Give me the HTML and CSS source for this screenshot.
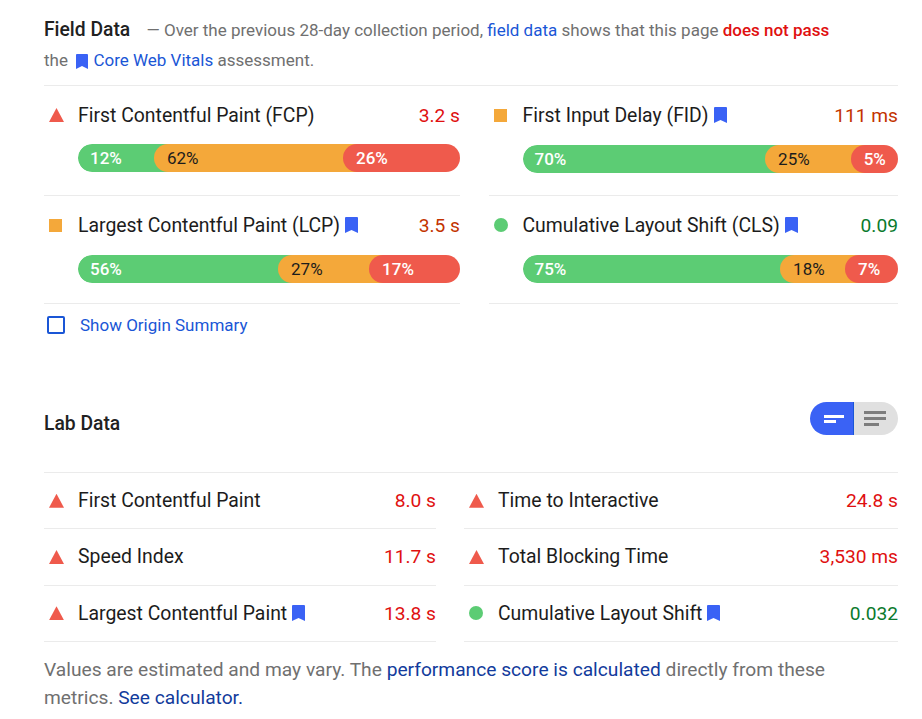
FILE: index.html
```html
<!DOCTYPE html>
<html lang="en">
<head>
  <meta charset="UTF-8">
  <title>PageSpeed Insights</title>
  <link rel="stylesheet" href="styles.css">
</head>
<body>

  <!-- Field data -->
  <section class="field-head">
    <p class="intro">
      <span class="section-title">Field Data</span>
      <span class="intro-dash">—</span> Over the previous 28-day collection period, <a href="#">field data</a> shows that this page <span class="fail-text">does not pass</span><br>
      the <svg class="mark mark-inline" viewBox="0 0 13 16"><path d="M1 0h11a1 1 0 0 1 1 1v15l-6.500-3L0 16V1a1 1 0 0 1 1-1z"/></svg> <a href="#">Core Web Vitals</a> assessment.
    </p>
  </section>

  <div class="field-grid">
    <div class="field-metric">
      <div class="metric-line">
        <i class="icon-fail"></i>
        <span class="metric-name">First Contentful Paint (FCP)</span>
        <span class="metric-value value-fail">3.2 s</span>
      </div>
      <div class="bar">
        <div class="seg seg-good" style="width: 23.82%">12%</div>
        <div class="seg seg-avg" style="width: 53.4%">62%</div>
        <div class="seg seg-bad">26%</div>
      </div>
    </div>
    <div class="field-metric">
      <div class="metric-line">
        <i class="icon-avg"></i>
        <span class="metric-name">First Input Delay (FID)</span>
        <svg class="mark" viewBox="0 0 13 16"><path d="M1 0h11a1 1 0 0 1 1 1v15l-6.500-3L0 16V1a1 1 0 0 1 1-1z"/></svg>
        <span class="metric-value value-avg">111 ms</span>
      </div>
      <div class="bar">
        <div class="seg seg-good" style="width: 68.6%">70%</div>
        <div class="seg seg-avg" style="width: 26.8%">25%</div>
        <div class="seg seg-bad">5%</div>
      </div>
    </div>
    <div class="field-metric">
      <div class="metric-line">
        <i class="icon-avg"></i>
        <span class="metric-name">Largest Contentful Paint (LCP)</span>
        <svg class="mark" viewBox="0 0 13 16"><path d="M1 0h11a1 1 0 0 1 1 1v15l-6.500-3L0 16V1a1 1 0 0 1 1-1z"/></svg>
        <span class="metric-value value-avg">3.5 s</span>
      </div>
      <div class="bar">
        <div class="seg seg-good" style="width: 56.3%">56%</div>
        <div class="seg seg-avg" style="width: 27.75%">27%</div>
        <div class="seg seg-bad">17%</div>
      </div>
    </div>
    <div class="field-metric">
      <div class="metric-line">
        <i class="icon-good"></i>
        <span class="metric-name">Cumulative Layout Shift (CLS)</span>
        <svg class="mark" viewBox="0 0 13 16"><path d="M1 0h11a1 1 0 0 1 1 1v15l-6.500-3L0 16V1a1 1 0 0 1 1-1z"/></svg>
        <span class="metric-value value-good">0.09</span>
      </div>
      <div class="bar">
        <div class="seg seg-good" style="width: 72.6%">75%</div>
        <div class="seg seg-avg" style="width: 21.3%">18%</div>
        <div class="seg seg-bad">7%</div>
      </div>
    </div>
  </div>

  <label class="origin">
    <span class="checkbox"></span>
    <span>Show Origin Summary</span>
  </label>

  <!-- Lab data -->
  <div class="lab-head">
    <span class="section-title lab-title">Lab Data</span>
    <div class="toggle">
      <div class="toggle-on">
        <span class="line"></span>
        <span class="line line-short"></span>
      </div>
      <div class="toggle-off">
        <span class="line"></span>
        <span class="line"></span>
        <span class="line line-short"></span>
      </div>
    </div>
  </div>

  <div class="lab-grid">
    <div class="lab-metric">
      <i class="icon-fail"></i>
      <span class="metric-name">First Contentful Paint</span>
      <span class="metric-value value-fail">8.0 s</span>
    </div>
    <div class="lab-metric">
      <i class="icon-fail"></i>
      <span class="metric-name">Time to Interactive</span>
      <span class="metric-value value-fail">24.8 s</span>
    </div>
    <div class="lab-metric">
      <i class="icon-fail"></i>
      <span class="metric-name">Speed Index</span>
      <span class="metric-value value-fail">11.7 s</span>
    </div>
    <div class="lab-metric">
      <i class="icon-fail"></i>
      <span class="metric-name">Total Blocking Time</span>
      <span class="metric-value value-fail">3,530 ms</span>
    </div>
    <div class="lab-metric">
      <i class="icon-fail"></i>
      <span class="metric-name">Largest Contentful Paint</span>
      <svg class="mark" viewBox="0 0 13 16"><path d="M1 0h11a1 1 0 0 1 1 1v15l-6.500-3L0 16V1a1 1 0 0 1 1-1z"/></svg>
      <span class="metric-value value-fail">13.8 s</span>
    </div>
    <div class="lab-metric">
      <i class="icon-good"></i>
      <span class="metric-name">Cumulative Layout Shift</span>
      <svg class="mark" viewBox="0 0 13 16"><path d="M1 0h11a1 1 0 0 1 1 1v15l-6.500-3L0 16V1a1 1 0 0 1 1-1z"/></svg>
      <span class="metric-value value-good">0.032</span>
    </div>
  </div>

  <p class="footnote">
    Values are estimated and may vary. The <a href="#">performance score is calculated</a> directly from these<br>
    metrics. <a href="#">See calculator.</a>
  </p>

</body>
</html>
```

FILE: styles.css
```css
body {
  font-family: Roboto, "Liberation Sans", sans-serif;
  background-color: white;
  color: #212121;
  margin: 0;
  padding: 0 24px 0 44px;
  height: 719px;
  box-sizing: border-box;
  overflow: hidden;
}
a {
  text-decoration: none;
}
.section-title {
  font-size: 19.3px;
  font-weight: 500;
  color: #212121;
}
.lab-title {
  margin-top: 10px;
}
.intro {
  margin: 0;
  height: 85px;
  box-sizing: border-box;
  padding-top: 15px;
  font-size: 17px;
  line-height: 30px;
  color: #707070;
}
.intro a {
  color: #1a56d6;
}
.intro-dash {
  margin-left: 12px;
}
.fail-text {
  color: #e01010;
  font-weight: 500;
}
.mark {
  width: 13px;
  height: 16px;
  fill: #3a62f5;
  flex: none;
  margin-left: 5px;
}
.mark-inline {
  width: 12px;
  height: 15px;
  margin: 0 1px 0 4px;
  vertical-align: -3px;
}
.field-grid {
  display: grid;
  grid-template-columns: 416px 409.5px;
  grid-template-rows: 110px 108px;
  column-gap: 28.5px;
  border-top: 1px solid #ebebeb;
  height: 219px;
  box-sizing: border-box;
}
.field-metric {
  border-bottom: 1px solid #ebebeb;
  padding-top: 15px;
}
.field-metric:nth-child(n+2) .bar {
  margin-top: 16px;
}
.metric-line {
  display: flex;
  align-items: center;
  height: 28px;
}
.metric-name {
  font-size: 19.4px;
  color: #1c1c1c;
}
.metric-value {
  font-size: 19.2px;
  margin-left: auto;
}
.value-fail {
  color: #e01010;
}
.value-avg {
  color: #c33300;
}
.value-good {
  color: #0a7a2d;
}
.icon-fail,
.icon-avg,
.icon-good {
  flex: none;
  margin: 0 14px 0 5px;
  width: 15px;
  height: 14px;
}
.icon-fail {
  background-color: #ef5a4c;
  clip-path: polygon(50% 0, 100% 100%, 0 100%);
}
.icon-avg {
  background-color: #f4a83a;
  height: 13px;
  width: 13px;
  margin: 0 16px 0 5px;
}
.icon-good {
  background-color: #5ccc74;
  border-radius: 50%;
  width: 14px;
  margin: 0 15px 0 5px;
}
.bar {
  display: flex;
  height: 28px;
  margin: 15px 0 0 34px;
  border-radius: 14px;
  overflow: hidden;
  font-size: 17px;
  font-weight: 500;
  line-height: 28px;
}
.seg {
  box-sizing: border-box;
  border-radius: 14px 0 0 14px;
  margin-left: -15px;
  padding-left: 13px;
}
.seg:first-child {
  margin-left: 0;
  padding-left: 12px;
}
.seg-good {
  background-color: #5ccc74;
  color: white;
}
.seg-avg {
  background-color: #f4a83a;
  color: #1c1c1c;
  font-weight: 400;
}
.seg-bad {
  flex: 1;
  background-color: #ef5a4c;
  color: white;
}
.origin {
  display: flex;
  align-items: center;
  gap: 15px;
  margin: 9px 0 0 3px;
  height: 24px;
  font-size: 17px;
  color: #1a56d6;
}
.checkbox {
  width: 14px;
  height: 14px;
  border: 2px solid #1a56d6;
  border-radius: 2px;
}
.lab-head {
  display: flex;
  justify-content: space-between;
  align-items: center;
  margin-top: 65px;
  height: 33px;
}
.toggle {
  display: flex;
  width: 88px;
  height: 33px;
  border-radius: 17px;
  overflow: hidden;
}
.toggle-on,
.toggle-off {
  display: flex;
  flex-direction: column;
  justify-content: center;
}
.toggle-on {
  width: 44px;
  box-sizing: border-box;
  gap: 2px;
  padding-left: 14px;
  background-color: #3a62f5;
  border-right: 1px solid #1a56d6;
}
.toggle-off {
  flex: 1;
  gap: 3px;
  padding-left: 10px;
  background-color: #e0e0e0;
}
.line {
  display: block;
  width: 22px;
  height: 3px;
  background-color: #7d7d7d;
}
.line-short {
  width: 15px;
}
.toggle-on .line {
  width: 20px;
  background-color: white;
}
.toggle-on .line-short {
  width: 12px;
}
.lab-grid {
  display: grid;
  grid-template-columns: 392px 434px;
  column-gap: 28px;
  margin-top: 37px;
  border-top: 1px solid #ebebeb;
}
.lab-metric {
  display: flex;
  align-items: center;
  height: 56.33px;
  box-sizing: border-box;
  border-bottom: 1px solid #ebebeb;
}
.footnote {
  margin: 14px 0 0;
  font-size: 19.2px;
  line-height: 28.5px;
  color: #707070;
}
.footnote a {
  color: #123b9c;
}
```
